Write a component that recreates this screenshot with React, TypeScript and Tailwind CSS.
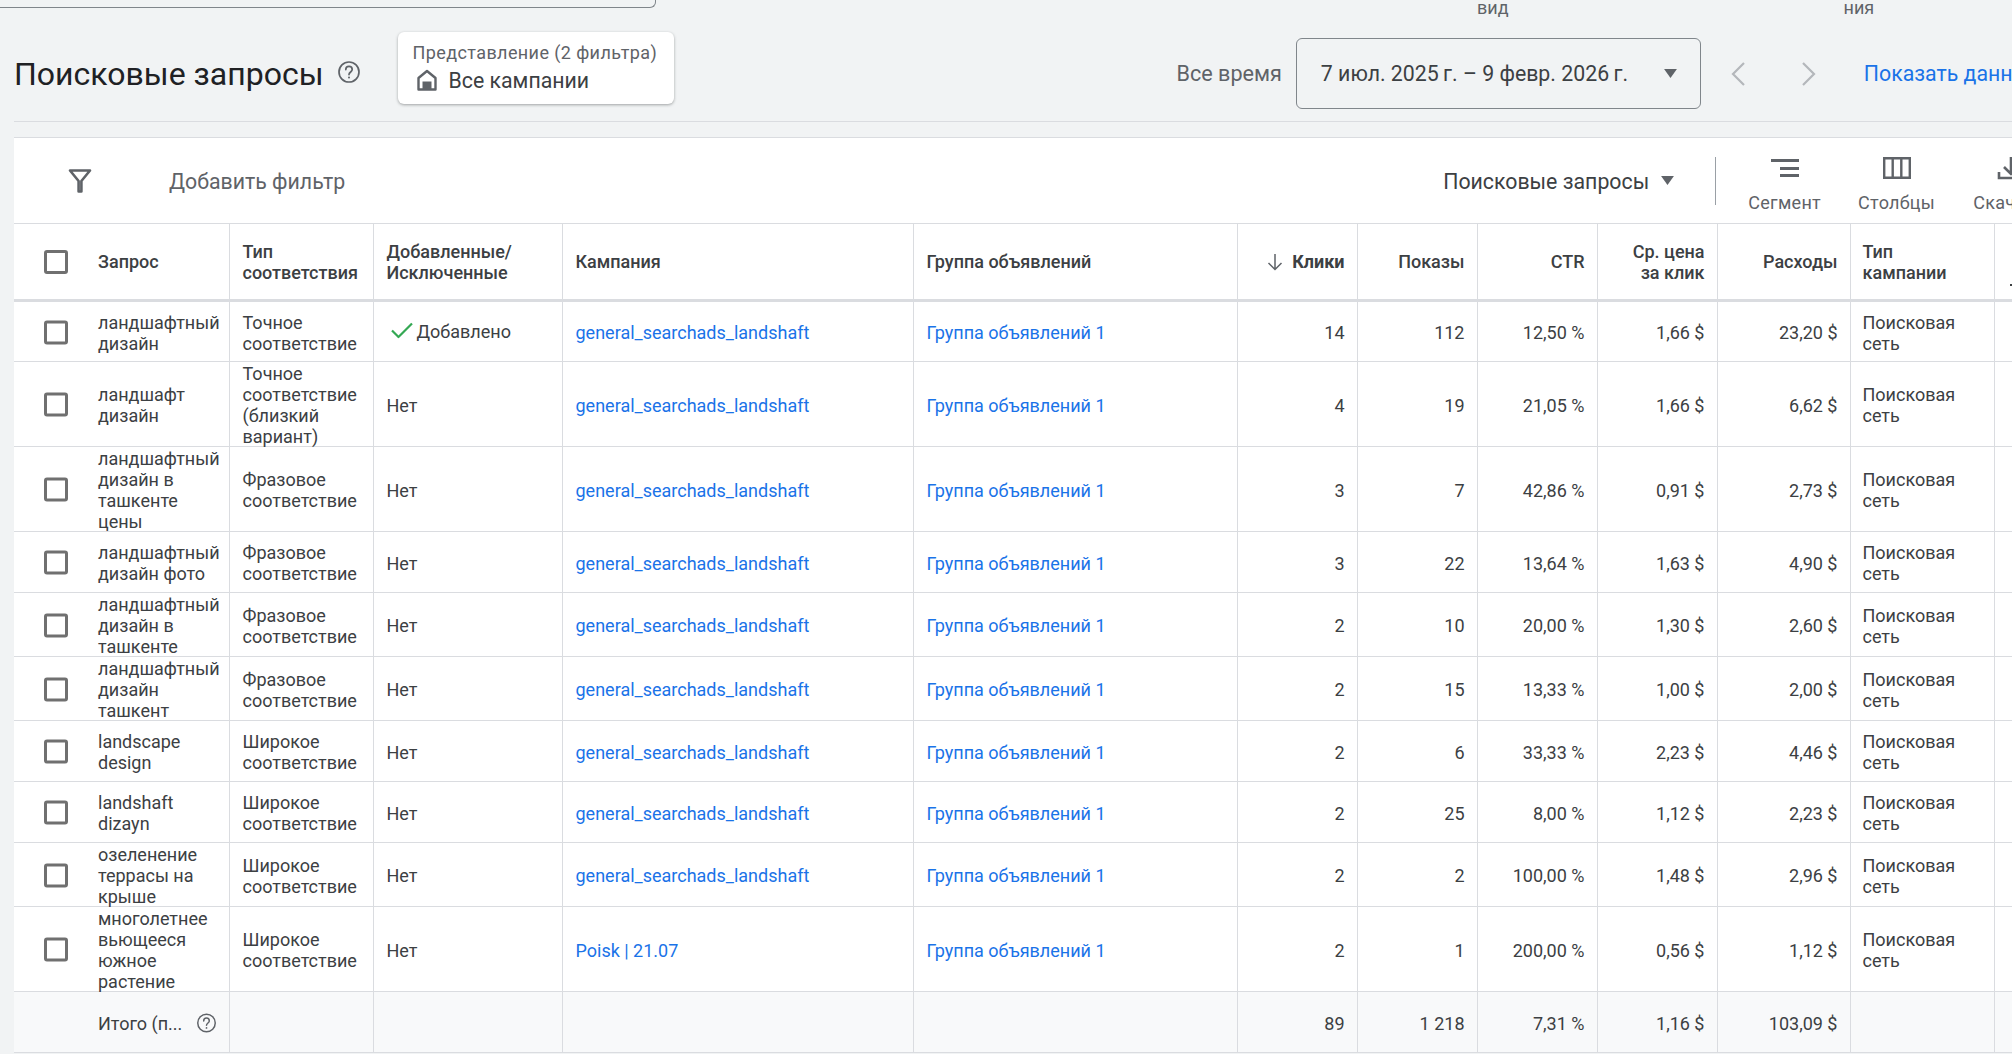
import type { ReactNode } from "react";

type Row = {
    h: string;
    query: string;
    match: string;
    added?: boolean;
    campaign?: string;
    clicks: string;
    shows: string;
    ctr: string;
    cpc: string;
    cost: string;
};

const EXACT = "Точное соответствие";
const PHRASE = "Фразовое соответствие";
const BROAD = "Широкое соответствие";

const rows: Row[] = [
    { h: "h-[61px]", query: "ландшафтный дизайн", match: EXACT, added: true, clicks: "14", shows: "112", ctr: "12,50 %", cpc: "1,66 $", cost: "23,20 $" },
    { h: "h-[85px]", query: "ландшафт дизайн", match: "Точное соответствие (близкий вариант)", clicks: "4", shows: "19", ctr: "21,05 %", cpc: "1,66 $", cost: "6,62 $" },
    { h: "h-[85px]", query: "ландшафтный дизайн в ташкенте цены", match: PHRASE, clicks: "3", shows: "7", ctr: "42,86 %", cpc: "0,91 $", cost: "2,73 $" },
    { h: "h-[61px]", query: "ландшафтный дизайн фото", match: PHRASE, clicks: "3", shows: "22", ctr: "13,64 %", cpc: "1,63 $", cost: "4,90 $" },
    { h: "h-[64px]", query: "ландшафтный дизайн в ташкенте", match: PHRASE, clicks: "2", shows: "10", ctr: "20,00 %", cpc: "1,30 $", cost: "2,60 $" },
    { h: "h-[64px]", query: "ландшафтный дизайн ташкент", match: PHRASE, clicks: "2", shows: "15", ctr: "13,33 %", cpc: "1,00 $", cost: "2,00 $" },
    { h: "h-[61px]", query: "landscape design", match: BROAD, clicks: "2", shows: "6", ctr: "33,33 %", cpc: "2,23 $", cost: "4,46 $" },
    { h: "h-[61px]", query: "landshaft dizayn", match: BROAD, clicks: "2", shows: "25", ctr: "8,00 %", cpc: "1,12 $", cost: "2,23 $" },
    { h: "h-[64px]", query: "озеленение террасы на крыше", match: BROAD, clicks: "2", shows: "2", ctr: "100,00 %", cpc: "1,48 $", cost: "2,96 $" },
    { h: "h-[85px]", query: "многолетнее вьющееся южное растение", match: BROAD, campaign: "Poisk | 21.07", clicks: "2", shows: "1", ctr: "200,00 %", cpc: "0,56 $", cost: "1,12 $" },
];

function HelpIcon({ className }: { className: string }) {
    return (
        <svg viewBox="0 0 24 24" className={className} fill="none" stroke="#5f6368" strokeWidth="1.7">
            <circle cx="12" cy="12" r="10" />
            <path d="M8.8 9.6a3.2 3.2 0 0 1 6.4 0c0 2.3-3.2 2.5-3.2 5" strokeLinecap="round" />
            <circle cx="12" cy="17.6" r="1" fill="#5f6368" stroke="none" />
        </svg>
    );
}

function Caret({ className }: { className: string }) {
    return (
        <svg viewBox="0 0 16 12" className={className} fill="#5f6368">
            <path d="M1 1h14l-7 10z" />
        </svg>
    );
}

function Checkbox() {
    return <span className="block h-[24px] w-[24px] shrink-0 rounded-[3px] border-[3px] border-[#707070]" />;
}

function ToolButton({ label, icon, className }: { label: string; icon: ReactNode; className: string }) {
    return (
        <div className={`mt-[8px] flex flex-col items-center whitespace-nowrap ${className}`}>
            <div className="flex h-[24px] items-center">{icon}</div>
            <span className="mt-[12px] text-[18px] leading-[21px] tracking-[0.3px] text-[#5f6368]">{label}</span>
        </div>
    );
}

function Th({ children, right, className }: { children: ReactNode; right?: boolean; className?: string }) {
    return (
        <th
            className={`border-r border-b-[3px] border-r-[#dadce0] border-b-[#dadce0] align-middle text-[18px] font-medium leading-[21px] text-[#3c4043] ${
                right ? "pl-[13px] pr-[12px] text-right" : "px-[13px] text-left"
            } ${className ?? ""}`}
        >
            {children}
        </th>
    );
}

function Td({ children, right, className }: { children?: ReactNode; right?: boolean; className?: string }) {
    return (
        <td
            className={`border-r border-b border-[#dadce0] align-middle ${right ? "pl-[13px] pr-[12px] text-right" : "px-[13px] text-left"} ${
                className ?? ""
            }`}
        >
            <div className="translate-y-[0.5px]">{children}</div>
        </td>
    );
}

export default function App() {
    return (
        <div className="h-[1054px] w-[2012px] overflow-hidden bg-[#f1f3f4] font-[Roboto,sans-serif] text-[18px] leading-[21px] text-[#3c4043]">
            {/* обрезанная верхняя полоса */}
            <div className="flex h-[15px] items-start text-[#5f6368]">
                <div className="h-[8px] w-[656px] rounded-br-[6px] border-r border-b border-[#80868b]" />
                <span className="ml-[821px] mt-[1px] leading-[14px]">вид</span>
                <span className="ml-[335px] mt-[1px] leading-[14px]">ния</span>
            </div>

            <div className="ml-[14px] flex h-[107px] items-center border-b border-[#dadce0]">
                <h1 className="mt-[12px] whitespace-nowrap text-[32px] font-normal leading-[40px] text-[#202124]">
                    Поисковые запросы
                </h1>
                <HelpIcon className="ml-[13px] mt-[8px] h-[24px] w-[24px] shrink-0" />
                <div className="ml-[37px] flex h-[72px] w-[276px] shrink-0 flex-col justify-center rounded-[6px] bg-white pb-[3px] pl-[15px] shadow-[0_1px_3px_rgba(60,64,67,0.45)]">
                    <div className="whitespace-nowrap tracking-[0.4px] text-[#5f6368]">Представление (2 фильтра)</div>
                    <div className="mt-[6px] flex items-center gap-[11px] whitespace-nowrap text-[21.300px] text-[#3c4043]">
                        <svg viewBox="0 0 22 22" className="ml-[3px] h-[22px] w-[22px]" fill="none">
                            <path d="M11 2 2.500 9v11.500h17V9z" stroke="#5f6368" strokeWidth="2.400" strokeLinejoin="round" />
                            <path d="M6.500 12.500h9v8h-9z" fill="#5f6368" />
                        </svg>
                        Все кампании
                    </div>
                </div>
                <div className="mt-[11px] flex items-center">
                    <span className="ml-[503px] whitespace-nowrap text-[21.600px] text-[#5f6368]">Все время</span>
                    <div className="ml-[14px] flex h-[71px] w-[405px] shrink-0 items-center rounded-[6px] border border-[#80868b] pl-[24px] pr-[22px] text-[21.300px]">
                        <span className="whitespace-nowrap">7 июл. 2025&#8201;г. – 9 февр. 2026&#8201;г.</span>
                        <Caret className="ml-auto h-[11px] w-[15px]" />
                    </div>
                    <svg viewBox="0 0 16 24" className="ml-[29px] h-[24px] w-[16px] shrink-0" fill="none" stroke="#b4b7bb" strokeWidth="2.200">
                        <path d="M14 1 3 12l11 11" />
                    </svg>
                    <svg viewBox="0 0 16 24" className="ml-[55px] h-[24px] w-[16px] shrink-0" fill="none" stroke="#b4b7bb" strokeWidth="2.200">
                        <path d="m2 1 11 11L2 23" />
                    </svg>
                    <span className="ml-[47px] whitespace-nowrap text-[21.300px] text-[#1a73e8]">Показать данные</span>
                </div>
            </div>

            <div className="ml-[14px] mt-[15px] flex h-[86px] items-center overflow-hidden border-t border-[#dadce0] bg-white">
                <svg viewBox="0 0 24 24" className="ml-[54px] h-[25px] w-[24px] shrink-0" fill="none" stroke="#5f6368" strokeWidth="2.600">
                    <path d="M2 2h20l-8.600 10.500V23h-2.800V12.500z" strokeLinejoin="round" />
                </svg>
                <span className="ml-[77px] mt-[2px] whitespace-nowrap text-[21.300px] text-[#5f6368]">Добавить фильтр</span>
                <span className="ml-[1098px] mt-[2px] whitespace-nowrap text-[21.300px] text-[#3c4043]">Поисковые запросы</span>
                <Caret className="ml-[11px] h-[11px] w-[15px] shrink-0" />
                <div className="ml-[40px] h-[48px] w-px shrink-0 bg-[#9aa0a6]" />
                <ToolButton
                    className="ml-[32px] w-[74px]"
                    label="Сегмент"
                    icon={
                        <svg viewBox="0 0 28 20" className="h-[20px] w-[28px]" fill="#5f6368">
                            <path d="M0 1h28v3H0zM9 9h19v3H9zM9 16h19v3H9z" />
                        </svg>
                    }
                />
                <ToolButton
                    className="ml-[37px] w-[79px]"
                    label="Столбцы"
                    icon={
                        <svg viewBox="0 0 28 22" className="h-[22px] w-[28px]" fill="none" stroke="#5f6368" strokeWidth="2.400">
                            <path d="M1.200 1.200h25.600v19.600H1.200zM9.700 1.200v19.600M18.300 1.200v19.600" />
                        </svg>
                    }
                />
                <ToolButton
                    className="ml-[38px] w-[80px] shrink-0 items-start"
                    label="Скачать"
                    icon={
                        <svg viewBox="0 0 28 24" className="ml-[24px] h-[24px] w-[28px]" fill="none" stroke="#5f6368" strokeWidth="2.600">
                            <path d="M14 1v16M7 11l7 7 7-7M2 16v6h24v-6" />
                        </svg>
                    }
                />
            </div>

            <table className="ml-[14px] w-[1998px] table-fixed border-collapse bg-white">
                <colgroup>
                    <col className="w-[215px]" />
                    <col className="w-[144px]" />
                    <col className="w-[189px]" />
                    <col className="w-[351px]" />
                    <col className="w-[324px]" />
                    <col className="w-[120px]" />
                    <col className="w-[120px]" />
                    <col className="w-[120px]" />
                    <col className="w-[120px]" />
                    <col className="w-[133px]" />
                    <col className="w-[144px]" />
                    <col className="w-[18px]" />
                </colgroup>
                <thead>
                    <tr className="h-[77px] border-t border-[#dadce0]">
                        <Th className="pl-[30px] pr-0">
                            <div className="flex items-center gap-[30px]">
                                <Checkbox />
                                Запрос
                            </div>
                        </Th>
                        <Th>Тип соответствия</Th>
                        <Th>Добавленные/ Исключенные</Th>
                        <Th>Кампания</Th>
                        <Th>Группа объявлений</Th>
                        <Th right>
                            <div className="flex items-center justify-end gap-[9px] font-bold">
                                <svg viewBox="0 0 16 18" className="h-[18px] w-[16px]" fill="none" stroke="#5f6368" strokeWidth="1.500">
                                    <path d="M8 1v15M1.500 10 8 16.500 14.500 10" />
                                </svg>
                                Клики
                            </div>
                        </Th>
                        <Th right>Показы</Th>
                        <Th right>CTR</Th>
                        <Th right>Ср. цена за клик</Th>
                        <Th right>Расходы</Th>
                        <Th className="pl-[12px]">Тип кампании</Th>
                        <Th className="relative border-r-0">
                            <span className="absolute top-[60px] left-[15px] h-[2px] w-[4px] bg-[#3c4043]" />
                        </Th>
                    </tr>
                </thead>
                <tbody>
                    {rows.map((r) => (
                        <tr key={r.query} className={r.h}>
                            <Td className="pl-[30px] pr-0">
                                <div className="flex items-center gap-[30px]">
                                    <Checkbox />
                                    <span className="w-[124px]">{r.query}</span>
                                </div>
                            </Td>
                            <Td>{r.match}</Td>
                            <Td>
                                {r.added ? (
                                    <div className="flex items-center gap-[4px] pb-[3px]">
                                        <svg viewBox="0 0 22 16" className="ml-[4px] h-[16px] w-[22px]" fill="none" stroke="#34a853" strokeWidth="2.200">
                                            <path d="m1 8 6.500 6.500L21 1" />
                                        </svg>
                                        Добавлено
                                    </div>
                                ) : (
                                    "Нет"
                                )}
                            </Td>
                            <Td className="text-[#1a73e8]">{r.campaign ?? "general_searchads_landshaft"}</Td>
                            <Td className="text-[#1a73e8]">Группа объявлений 1</Td>
                            <Td right>{r.clicks}</Td>
                            <Td right>{r.shows}</Td>
                            <Td right>{r.ctr}</Td>
                            <Td right>{r.cpc}</Td>
                            <Td right>{r.cost}</Td>
                            <Td className="pl-[12px]">Поисковая сеть</Td>
                            <Td className="border-r-0" />
                        </tr>
                    ))}
                    <tr className="h-[61px] bg-[#f8f9fa]">
                        <Td className="pl-[84px] pr-0">
                            <div className="flex items-center">
                                Итого (п...
                                <HelpIcon className="ml-[14px] h-[21px] w-[21px] shrink-0" />
                            </div>
                        </Td>
                        <Td />
                        <Td />
                        <Td />
                        <Td />
                        <Td right>89</Td>
                        <Td right>1 218</Td>
                        <Td right>7,31 %</Td>
                        <Td right>1,16 $</Td>
                        <Td right>103,09 $</Td>
                        <Td />
                        <Td className="border-r-0" />
                    </tr>
                </tbody>
            </table>
        </div>
    );
}
